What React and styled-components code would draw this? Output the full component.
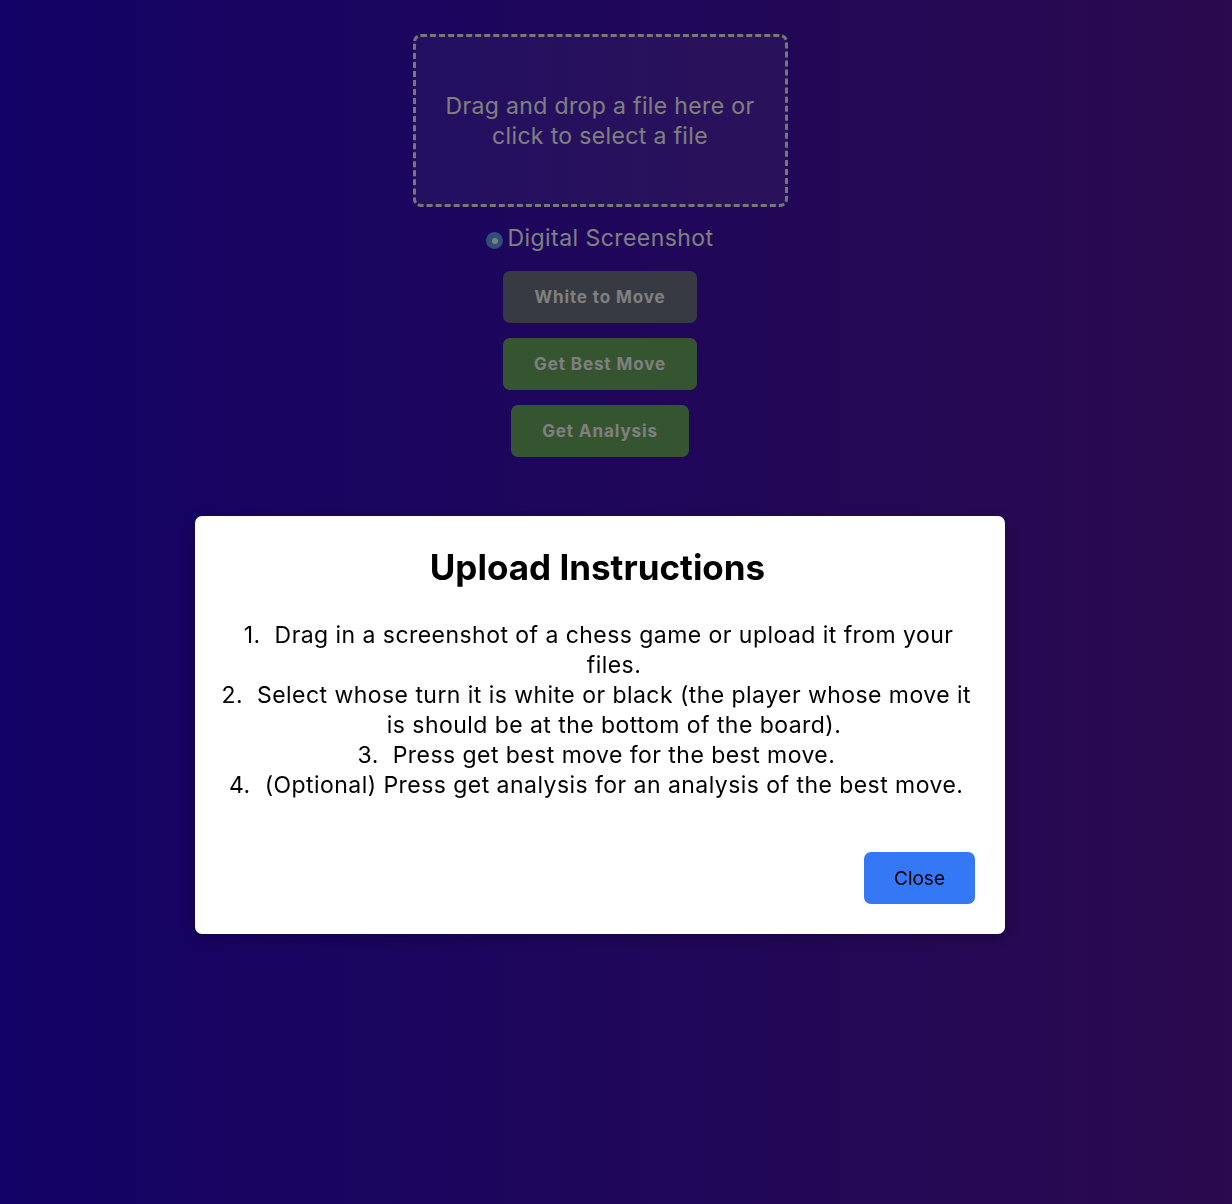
import React from 'react';
import styled, { createGlobalStyle } from 'styled-components';

const GlobalStyle = createGlobalStyle`
  html, body {
    margin: 0;
    padding: 0;
  }
  body {
    font-family: 'Inter', 'Noto Sans', sans-serif;
  }
  *, *::before, *::after {
    box-sizing: border-box;
  }
`;

const colors = {
  gradLeft: '#2606cc',
  gradRight: '#56149e',
  dim: 'rgba(0, 0, 0, 0.5)',
  secondary: '#6e7585',
  success: '#6aaa62',
  radio: '#5a9ef2',
  primary: '#3478f6',
};

// --- Page behind the modal ---

const Page = styled.div`
  min-height: 100vh;
  background: linear-gradient(to right, ${colors.gradLeft}, ${colors.gradRight});
`;

const Main = styled.main`
  width: 1200px;
  display: flex;
  flex-direction: column;
  align-items: center;
  padding-top: 34px;
`;

const DropZone = styled.div`
  width: 375px;
  height: 173px;
  border: 3px dashed #eeeeee;
  border-radius: 8px;
  background: rgba(255, 255, 255, 0.09);
  display: flex;
  align-items: center;
  justify-content: center;
  padding: 0 20px;
  color: #ffffff;
  font-size: 23px;
  line-height: 30px;
  text-align: center;
  letter-spacing: 0.35px;
  cursor: pointer;
`;

const RadioRow = styled.label`
  display: flex;
  align-items: center;
  margin-top: 15px;
  color: #ffffff;
  font-size: 23px;
  line-height: 32px;
  letter-spacing: 0.45px;
`;

const RadioDot = styled.span`
  width: 17px;
  height: 17px;
  border-radius: 50%;
  background: ${colors.radio};
  display: inline-flex;
  align-items: center;
  justify-content: center;
  margin: 5px 4px 0 0;

  &::after {
    content: '';
    width: 6px;
    height: 6px;
    border-radius: 50%;
    background: #ffffff;
  }
`;

const ButtonStack = styled.div`
  display: flex;
  flex-direction: column;
  align-items: center;
  gap: 15px;
  margin-top: 17px;
`;

const ActionButton = styled.button`
  min-width: ${(p) => p.$minWidth || 0}px;
  height: 52px;
  padding: 0 30px;
  border: none;
  border-radius: 7px;
  background: ${(p) => (p.$variant === 'success' ? colors.success : colors.secondary)};
  color: #ffffff;
  font-family: inherit;
  font-size: 17px;
  font-weight: 700;
  letter-spacing: 0.9px;
  cursor: pointer;
`;

// --- Modal ---

const Overlay = styled.div`
  position: fixed;
  inset: 0;
  background: ${colors.dim};
`;

const ModalFrame = styled.div`
  width: 1200px;
  display: flex;
  justify-content: center;
  padding-top: 516px;
`;

const Modal = styled.div`
  width: 810px;
  background: #ffffff;
  border-radius: 7px;
  box-shadow: 0 4px 16px rgba(0, 0, 0, 0.25);
  padding: 30px 30px 30px 25px;
  display: flex;
  flex-direction: column;
`;

const Title = styled.h2`
  margin: 0;
  text-align: center;
  font-size: 35px;
  line-height: 42px;
  font-weight: 700;
  color: #000000;
  letter-spacing: 0;
`;

const Steps = styled.ol`
  margin: 32px 0 0;
  padding: 0 0 0 33px;
  list-style: none;
  counter-reset: step;
  text-align: center;
  color: #000000;
  font-size: 23px;
  line-height: 30px;
  letter-spacing: 0.45px;
`;

// the number hangs to the left of the centred text, like an outside marker
const Step = styled.li`
  counter-increment: step;

  &::before {
    content: counter(step) '.';
    display: inline-block;
    width: 40px;
    margin-left: -40px;
    padding-right: 14px;
    text-align: right;
  }
`;

const Footer = styled.div`
  display: flex;
  justify-content: flex-end;
  margin-top: 52px;
`;

const CloseButton = styled.button`
  width: 111px;
  height: 52px;
  border: none;
  border-radius: 7px;
  background: ${colors.primary};
  color: #000000;
  font-family: inherit;
  font-size: 19px;
  cursor: pointer;
`;

const steps = [
  'Drag in a screenshot of a chess game or upload it from your files.',
  'Select whose turn it is white or black (the player whose move it is should be at the bottom of the board).',
  'Press get best move for the best move.',
  '(Optional) Press get analysis for an analysis of the best move.',
];

const App = () => {
  return (
    <>
      <GlobalStyle />
      <Page>
        <Main>
          <DropZone>Drag and drop a file here or click to select a file</DropZone>
          <RadioRow>
            <RadioDot />
            Digital Screenshot
          </RadioRow>
          <ButtonStack>
            <ActionButton $minWidth={194}>White to Move</ActionButton>
            <ActionButton $variant="success" $minWidth={194}>Get Best Move</ActionButton>
            <ActionButton $variant="success" $minWidth={178}>Get Analysis</ActionButton>
          </ButtonStack>
        </Main>
      </Page>
      <Overlay>
        <ModalFrame>
          <Modal>
            <Title>Upload Instructions</Title>
            <Steps>
              {steps.map((s) => (
                <Step key={s}>{s}</Step>
              ))}
            </Steps>
            <Footer>
              <CloseButton>Close</CloseButton>
            </Footer>
          </Modal>
        </ModalFrame>
      </Overlay>
    </>
  );
};

export default App;
